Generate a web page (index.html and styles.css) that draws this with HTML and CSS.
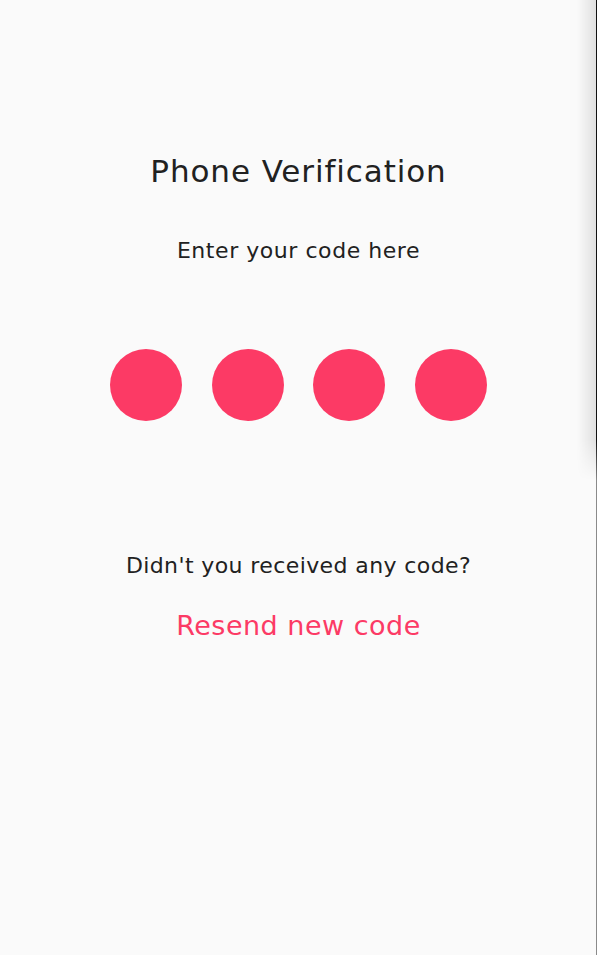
FILE: index.html
```html
<!DOCTYPE html>
<html lang="en">
<head>
<meta charset="utf-8">
<title>Phone Verification</title>
<link rel="stylesheet" href="styles.css">
</head>
<body>
<main class="screen">
  <h1 class="title">Phone Verification</h1>
  <p class="subtitle">Enter your code here</p>
  <div class="pins">
    <span class="pin"></span>
    <span class="pin"></span>
    <span class="pin"></span>
    <span class="pin"></span>
  </div>
  <p class="question">Didn't you received any code?</p>
  <a class="resend" href="#">Resend new code</a>
</main>
<div class="edge"></div>
</body>
</html>
```
FILE: styles.css
```css
html, body {
  margin: 0;
  padding: 0;
  height: 100%;
}
body {
  background: #fafafa;
  font-family: "DejaVu Sans", "Noto Sans", sans-serif;
  color: #212121;
  overflow: hidden;
}
.screen {
  display: flex;
  flex-direction: column;
  align-items: center;
  padding-top: 151px;
}
.title {
  margin: 0;
  font-size: 31px;
  line-height: 40px;
  font-weight: 400;
  letter-spacing: 0.9px;
}
.subtitle {
  margin: 46px 0 0;
  font-size: 22px;
  line-height: 28px;
  letter-spacing: 0.55px;
}
.pins {
  display: flex;
  gap: 29.5px;
  margin-top: 84px;
}
.pin {
  width: 72px;
  height: 72px;
  border-radius: 50%;
  background: #fc3a65;
}
.question {
  margin: 131px 0 0;
  font-size: 22px;
  line-height: 28px;
  letter-spacing: 0.4px;
}
.resend {
  margin-top: 29px;
  font-size: 27px;
  line-height: 34px;
  letter-spacing: 0.5px;
  color: #fc3a65;
  text-decoration: none;
}
.edge {
  position: fixed;
  top: 0;
  right: 0;
  width: 20px;
  height: 100%;
  background: linear-gradient(to right, transparent 0, transparent 19px, #8a8a8a 19px);
}
.edge::before {
  content: "";
  position: absolute;
  top: 0;
  right: 0;
  width: 20px;
  height: 480px;
  background: linear-gradient(to right, rgba(0,0,0,0) 0, rgba(0,0,0,0.1) 19px, #111 19px);
  -webkit-mask-image: linear-gradient(to bottom, #000 440px, transparent 480px);
  mask-image: linear-gradient(to bottom, #000 440px, transparent 480px);
}
```
